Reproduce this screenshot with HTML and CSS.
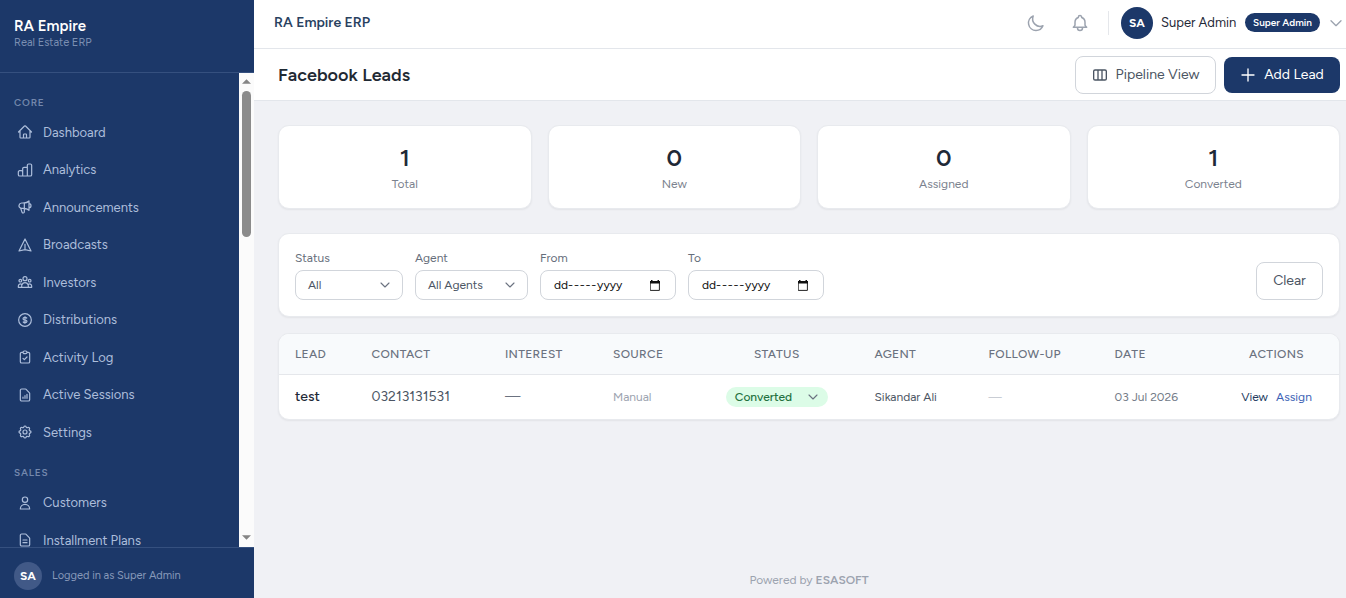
FILE: index.html
```html
<!DOCTYPE html>
<html lang="en">
<head>
    <meta charset="UTF-8">
    <meta name="viewport" content="width=device-width, initial-scale=1.0">
    <title>Facebook Leads - RA Empire ERP</title>
    <link rel="stylesheet" href="styles.css">
</head>
<body>
    <div class="app">
        <aside class="sidebar">
            <div class="brand">
                <div class="brand-name">RA Empire</div>
                <div class="brand-sub">Real Estate ERP</div>
            </div>

            <div class="nav-wrap">
                <nav class="nav">
                    <div class="nav-label">CORE</div>
                    <a class="nav-item">
                        <svg viewBox="0 0 24 24"><path d="m2.25 12 8.954-8.955c.44-.439 1.152-.439 1.591 0L21.75 12M4.5 9.75v10.125c0 .621.504 1.125 1.125 1.125H9.75v-4.875c0-.621.504-1.125 1.125-1.125h2.25c.621 0 1.125.504 1.125 1.125V21h4.125c.621 0 1.125-.504 1.125-1.125V9.75M8.25 21h8.25"/></svg>
                        <span>Dashboard</span>
                    </a>
                    <a class="nav-item">
                        <svg viewBox="0 0 24 24"><path d="M8.500 21V10a2 2 0 0 1 2-2h5M8.500 21V15a2 2 0 0 0-2-2H4a2 2 0 0 0-2 2v4a2 2 0 0 0 2 2h16a2 2 0 0 0 2-2V5a2 2 0 0 0-2-2h-2.500a2 2 0 0 0-2 2v16"/></svg>
                        <span>Analytics</span>
                    </a>
                    <a class="nav-item">
                        <svg viewBox="0 0 24 24"><path d="M11 5.882V19.240a1.760 1.760 0 0 1-3.417.592l-2.147-6.150M18 13a3 3 0 1 0 0-6M5.436 13.683A4.001 4.001 0 0 1 7 6h1.832c4.100 0 7.625-1.234 9.168-3v14c-1.543-1.766-5.067-3-9.168-3H7a3.988 3.988 0 0 1-1.564-.317Z"/></svg>
                        <span>Announcements</span>
                    </a>
                    <a class="nav-item">
                        <svg viewBox="0 0 24 24"><path d="m12 19 9 2-9-18-9 18 9-2Zm0 0v-8"/></svg>
                        <span>Broadcasts</span>
                    </a>
                    <a class="nav-item">
                        <svg viewBox="0 0 24 24"><path d="M17 20h5v-2a3 3 0 0 0-5.356-1.857M17 20H7m10 0v-2c0-.656-.126-1.283-.356-1.857M7 20H2v-2a3 3 0 0 1 5.356-1.857M7 20v-2c0-.656.126-1.283.356-1.857m0 0a5.002 5.002 0 0 1 9.288 0M15 7a3 3 0 1 1-6 0 3 3 0 0 1 6 0Zm6 3a2 2 0 1 1-4 0 2 2 0 0 1 4 0ZM7 10a2 2 0 1 1-4 0 2 2 0 0 1 4 0Z"/></svg>
                        <span>Investors</span>
                    </a>
                    <a class="nav-item">
                        <svg viewBox="0 0 24 24"><path d="M12 8c-1.657 0-3 .895-3 2s1.343 2 3 2 3 .895 3 2-1.343 2-3 2m0-8c1.110 0 2.080.402 2.599 1M12 8V7m0 1v8m0 0v1m0-1c-1.110 0-2.080-.402-2.599-1M21.500 12a9.500 9.500 0 1 1-19 0 9.500 9.500 0 0 1 19 0Z"/></svg>
                        <span>Distributions</span>
                    </a>
                    <a class="nav-item">
                        <svg viewBox="0 0 24 24"><path d="M9 5H7a2 2 0 0 0-2 2v12a2 2 0 0 0 2 2h10a2 2 0 0 0 2-2V7a2 2 0 0 0-2-2h-2M9 5a2 2 0 0 0 2 2h2a2 2 0 0 0 2-2M9 5a2 2 0 0 1 2-2h2a2 2 0 0 1 2 2m-6 9 2 2 4-4"/></svg>
                        <span>Activity Log</span>
                    </a>
                    <a class="nav-item">
                        <svg viewBox="0 0 24 24"><path d="M9 17v-2m3 2v-4m3 4v-6m2 10H7a2 2 0 0 1-2-2V5a2 2 0 0 1 2-2h5.586a1 1 0 0 1 .707.293l5.414 5.414a1 1 0 0 1 .293.707V19a2 2 0 0 1-2 2Z"/></svg>
                        <span>Active Sessions</span>
                    </a>
                    <a class="nav-item">
                        <svg viewBox="0 0 24 24"><path d="M10.325 4.317c.426-1.756 2.924-1.756 3.350 0a1.724 1.724 0 0 0 2.573 1.066c1.543-.94 3.310.826 2.370 2.370a1.724 1.724 0 0 0 1.065 2.572c1.756.426 1.756 2.924 0 3.350a1.724 1.724 0 0 0-1.066 2.573c.94 1.543-.826 3.310-2.370 2.370a1.724 1.724 0 0 0-2.572 1.065c-.426 1.756-2.924 1.756-3.350 0a1.724 1.724 0 0 0-2.573-1.066c-1.543.94-3.310-.826-2.370-2.370a1.724 1.724 0 0 0-1.065-2.572c-1.756-.426-1.756-2.924 0-3.350a1.724 1.724 0 0 0 1.066-2.573c-.94-1.543.826-3.310 2.370-2.370.996.608 2.296.07 2.572-1.065Z"/><circle cx="12" cy="12" r="3"/></svg>
                        <span>Settings</span>
                    </a>
                    <div class="nav-label nav-label-next">SALES</div>
                    <a class="nav-item">
                        <svg viewBox="0 0 24 24"><path d="M16 7a4 4 0 1 1-8 0 4 4 0 0 1 8 0ZM12 14a7 7 0 0 0-7 7h14a7 7 0 0 0-7-7Z"/></svg>
                        <span>Customers</span>
                    </a>
                    <a class="nav-item">
                        <svg viewBox="0 0 24 24"><path d="M9 12h6m-6 4h6m2 5H7a2 2 0 0 1-2-2V5a2 2 0 0 1 2-2h5.586a1 1 0 0 1 .707.293l5.414 5.414a1 1 0 0 1 .293.707V19a2 2 0 0 1-2 2Z"/></svg>
                        <span>Installment Plans</span>
                    </a>
                </nav>
                <div class="scrollbar">
                    <svg class="scroll-arrow" viewBox="0 0 10 5"><path d="M0 5 5 0l5 5Z"/></svg>
                    <div class="scroll-thumb"></div>
                    <svg class="scroll-arrow scroll-down" viewBox="0 0 10 5"><path d="M0 0h10L5 5Z"/></svg>
                </div>
            </div>

            <div class="sidebar-footer">
                <div class="avatar avatar-muted">SA</div>
                <span class="logged-in">Logged in as Super Admin</span>
            </div>
        </aside>

        <main class="main">
            <header class="topbar">
                <div class="topbar-title">RA Empire ERP</div>
                <div class="topbar-right">
                    <svg class="icon-moon" viewBox="0 0 24 24"><path d="M20.354 15.354A9 9 0 0 1 8.646 3.646 9.003 9.003 0 0 0 12 21a9.003 9.003 0 0 0 8.354-5.646Z"/></svg>
                    <svg class="icon-bell" viewBox="0 0 24 24"><path d="M15 17h5l-1.405-1.405A2.032 2.032 0 0 1 18 14.158V11a6.002 6.002 0 0 0-4-5.659V5a2 2 0 1 0-4 0v.341C7.670 6.165 6 8.388 6 11v3.159c0 .538-.214 1.055-.595 1.436L4 17h5m6 0v1a3 3 0 1 1-6 0v-1m6 0H9"/></svg>
                    <div class="divider"></div>
                    <div class="avatar avatar-user">SA</div>
                    <span class="user-name">Super Admin</span>
                    <span class="role">Super Admin</span>
                    <svg class="icon-caret" viewBox="0 0 24 24"><path d="m4.500 8.500 7.500 7.500 7.500-7.500"/></svg>
                </div>
            </header>

            <div class="page-header">
                <h1>Facebook Leads</h1>
                <div class="page-actions">
                    <a class="btn btn-pipeline">
                        <svg viewBox="0 0 24 24"><path d="M9 4.500v15m6-15v15m-10.500 0h15a2 2 0 0 0 2-2v-11a2 2 0 0 0-2-2h-15a2 2 0 0 0-2 2v11a2 2 0 0 0 2 2Z"/></svg>
                        <span>Pipeline View</span>
                    </a>
                    <a class="btn btn-primary">
                        <svg viewBox="0 0 24 24"><path d="M12 3v18M3 12h18"/></svg>
                        <span>Add Lead</span>
                    </a>
                </div>
            </div>

            <div class="content">
                <div class="stats">
                    <div class="card stat"><div class="stat-value">1</div><div class="stat-label">Total</div></div>
                    <div class="card stat"><div class="stat-value">0</div><div class="stat-label">New</div></div>
                    <div class="card stat"><div class="stat-value">0</div><div class="stat-label">Assigned</div></div>
                    <div class="card stat"><div class="stat-value">1</div><div class="stat-label">Converted</div></div>
                </div>

                <div class="card filters">
                    <div class="field field-status">
                        <label>Status</label>
                        <div class="control">
                            <span>All</span>
                            <svg class="chevron" viewBox="0 0 24 24"><path d="m4 8 8 8 8-8"/></svg>
                        </div>
                    </div>
                    <div class="field field-agent">
                        <label>Agent</label>
                        <div class="control">
                            <span>All Agents</span>
                            <svg class="chevron" viewBox="0 0 24 24"><path d="m4 8 8 8 8-8"/></svg>
                        </div>
                    </div>
                    <div class="field field-date">
                        <label>From</label>
                        <div class="control date">
                            <span>dd<i>-----</i>yyyy</span>
                            <svg class="calendar" viewBox="0 0 10 11"><path d="M.6 1.600h8.800v8.800H.6Z"/><path class="calendar-top" d="M0 1h1V0h1.500v1h5V0H9v1h1v2.600H0Z"/></svg>
                        </div>
                    </div>
                    <div class="field field-date">
                        <label>To</label>
                        <div class="control date">
                            <span>dd<i>-----</i>yyyy</span>
                            <svg class="calendar" viewBox="0 0 10 11"><path d="M.6 1.600h8.800v8.800H.6Z"/><path class="calendar-top" d="M0 1h1V0h1.500v1h5V0H9v1h1v2.600H0Z"/></svg>
                        </div>
                    </div>
                    <a class="btn btn-clear">Clear</a>
                </div>

                <div class="card table-card">
                    <table>
                        <thead>
                            <tr>
                                <th class="col-lead">LEAD</th>
                                <th class="col-contact">CONTACT</th>
                                <th class="col-interest">INTEREST</th>
                                <th class="col-source">SOURCE</th>
                                <th class="col-status center">STATUS</th>
                                <th class="col-agent">AGENT</th>
                                <th class="col-follow">FOLLOW-UP</th>
                                <th class="col-date">DATE</th>
                                <th class="col-actions center">ACTIONS</th>
                            </tr>
                        </thead>
                        <tbody>
                            <tr>
                                <td class="lead">test</td>
                                <td class="contact">03213131531</td>
                                <td class="interest">—</td>
                                <td class="source">Manual</td>
                                <td class="center">
                                    <span class="badge">Converted
                                        <svg class="chevron" viewBox="0 0 24 24"><path d="m4 8 8 8 8-8"/></svg>
                                    </span>
                                </td>
                                <td class="agent">Sikandar Ali</td>
                                <td class="follow">—</td>
                                <td class="date-cell">03 Jul 2026</td>
                                <td class="center actions"><a class="view">View</a><a class="assign">Assign</a></td>
                            </tr>
                        </tbody>
                    </table>
                </div>
            </div>

            <footer class="footer">Powered by <b>ESASOFT</b></footer>
        </main>
    </div>
</body>
</html>
```
FILE: styles.css
```css
* {
    box-sizing: border-box;
}
body {
    margin: 0;
    font-family: Figtree, Inter, "Liberation Sans", sans-serif;
    font-size: 14px;
    color: #1f2937;
    background: #f0f1f5;
}
svg {
    display: block;
    flex: none;
    fill: none;
    stroke: currentColor;
    stroke-width: 1.8;
    stroke-linecap: round;
    stroke-linejoin: round;
}
.app {
    display: flex;
    height: 598px;
    overflow: hidden;
}

/* sidebar */
.sidebar {
    width: 254px;
    flex: none;
    display: flex;
    flex-direction: column;
    background: #1c3869;
    color: #fff;
}
.brand {
    height: 73px;
    padding: 17px 14px 0;
    border-bottom: 1px solid #35507f;
}
.brand-name {
    font-size: 15px;
    font-weight: 600;
    line-height: 18px;
}
.brand-sub {
    font-size: 11px;
    line-height: 15px;
    color: #7b8fb2;
}
.nav-wrap {
    flex: 1;
    min-height: 0;
    display: flex;
}
.nav {
    flex: 1;
    padding: 8.5px 14px 0;
    overflow: hidden;
}
.nav-label {
    margin: 11.25px 0 0.75px;
    font-size: 10px;
    font-weight: 600;
    line-height: 20px;
    letter-spacing: 0.8px;
    color: #7488ad;
}
.nav-label-next {
    margin-top: 12.25px;
}
.nav-item {
    display: flex;
    align-items: center;
    gap: 10px;
    height: 37.5px;
    padding-left: 3px;
    font-size: 13px;
    color: #adbedb;
}
.nav-item svg {
    width: 16px;
    height: 16px;
}
.scrollbar {
    width: 15px;
    display: flex;
    flex-direction: column;
    align-items: center;
    padding: 6px 0 7px;
    background: #fbfbfb;
}
.scroll-arrow {
    width: 9px;
    height: 5px;
    fill: #858585;
    stroke: none;
}
.scroll-thumb {
    width: 9px;
    height: 146px;
    margin-top: 7px;
    border-radius: 5px;
    background: #8b8b8b;
}
.scroll-down {
    margin-top: auto;
}
.sidebar-footer {
    height: 51px;
    display: flex;
    align-items: center;
    gap: 10px;
    padding: 6px 14px 0;
    border-top: 1px solid #35507f;
}
.avatar {
    display: flex;
    align-items: center;
    justify-content: center;
    flex: none;
    border-radius: 50%;
    font-size: 12px;
    font-weight: 700;
    color: #fff;
}
.avatar-muted {
    width: 28px;
    height: 28px;
    background: #415987;
}
.logged-in {
    font-size: 11px;
    line-height: 14px;
    margin-bottom: 1px;
    color: #8799b9;
}

/* top bar */
.main {
    flex: 1;
    display: flex;
    flex-direction: column;
}
.topbar {
    height: 49px;
    flex: none;
    display: flex;
    align-items: center;
    justify-content: space-between;
    padding: 0 3px 3px 20px;
    background: #fff;
    border-bottom: 1px solid #e3e6eb;
}
.topbar-title {
    margin-bottom: 1px;
    font-size: 14px;
    font-weight: 600;
    color: #29415f;
}
.topbar-right {
    display: flex;
    align-items: center;
}
.icon-moon,
.icon-bell {
    width: 20px;
    height: 20px;
    color: #9ca3af;
}
.icon-bell {
    margin-left: 24px;
}
.divider {
    width: 1px;
    height: 24px;
    margin: 0 12px 0 18px;
    background: #e5e7eb;
}
.avatar-user {
    width: 32px;
    height: 32px;
    background: #1c3869;
}
.user-name {
    width: 76px;
    margin: 0 8px;
    white-space: nowrap;
    font-size: 13px;
}
.role {
    width: 75px;
    height: 19px;
    border-radius: 10px;
    background: #1c3869;
    color: #fff;
    font-size: 10px;
    font-weight: 600;
    line-height: 19px;
    text-align: center;
}
.icon-caret {
    width: 16px;
    height: 16px;
    margin-left: 8px;
    margin-right: -1px;
    color: #9ca3af;
    stroke-width: 2;
}
.page-header {
    height: 52px;
    flex: none;
    display: flex;
    align-items: center;
    justify-content: space-between;
    padding: 0 6px 0 24px;
    background: #fff;
    border-bottom: 1px solid #e3e6eb;
}
h1 {
    margin: 0;
    font-size: 18px;
    font-weight: 600;
    color: #1f2933;
}
.page-actions {
    display: flex;
    align-items: center;
    gap: 8px;
}
.btn {
    display: flex;
    align-items: center;
    justify-content: center;
    height: 38px;
    border: 1px solid #d1d5db;
    border-radius: 8px;
    background: #fff;
    font-size: 14px;
    color: #4b5563;
    white-space: nowrap;
}
.btn svg {
    width: 16px;
    height: 16px;
    stroke-width: 2;
}
.btn-pipeline {
    width: 141px;
    gap: 8px;
}
.btn-primary {
    width: 116px;
    height: 36px;
    gap: 8px;
    border: 0;
    background: #1c3869;
    color: #fff;
}

/* content */
.content {
    flex: 1;
    padding: 24px 6px 0 24px;
}
.card {
    background: #fff;
    border: 1px solid #e8eaee;
    border-radius: 11px;
    box-shadow: 0 1px 2px rgba(0, 0, 0, 0.06);
}
.stats {
    display: grid;
    grid-template-columns: repeat(4, 1fr);
    gap: 16px;
}
.stat {
    height: 84px;
    padding-top: 16px;
    text-align: center;
}
.stat-value {
    font-size: 24px;
    font-weight: 600;
    line-height: 32px;
}
.stat-label {
    font-size: 12px;
    line-height: 20px;
    color: #7b828e;
}
.filters {
    display: flex;
    align-items: flex-end;
    gap: 12px;
    height: 84px;
    margin: 24px 0 16px;
    padding: 0 16px 16px;
}
.field label {
    display: block;
    font-size: 12px;
    line-height: 16px;
    margin-bottom: 4px;
    color: #666e7b;
}
.field-status {
    width: 108px;
}
.field-agent {
    width: 113px;
}
.field-date {
    width: 136px;
}
.control {
    display: flex;
    align-items: center;
    justify-content: space-between;
    height: 30px;
    padding: 0 11px 0 12px;
    border: 1px solid #d1d5db;
    border-radius: 8px;
    font-size: 12px;
    color: #4b5563;
}
.chevron {
    width: 12px;
    height: 12px;
    color: #6b7280;
    stroke-width: 2.2;
}
.date {
    padding: 0 15px 0 13px;
    color: #111;
}
.date i {
    font-style: normal;
    letter-spacing: 0.8px;
}
.calendar {
    width: 10px;
    height: 11px;
    color: #222;
    stroke-width: 1;
}
.calendar-top {
    fill: #111;
    stroke: none;
}
.btn-clear {
    width: 67px;
    margin-left: auto;
    padding-bottom: 2px;
}

/* leads table */
.table-card {
    overflow: hidden;
}
table {
    width: 100%;
    table-layout: fixed;
    border-collapse: separate;
    border-spacing: 0;
}
th {
    height: 41px;
    padding: 0 0 1px 16px;
    border-bottom: 1px solid #e5e7eb;
    background: #f8fafc;
    font-size: 12px;
    font-weight: 500;
    letter-spacing: 0.3px;
    text-align: left;
    color: #6b7280;
}
td {
    height: 44px;
    padding: 0 0 1px 16px;
    font-size: 12px;
    white-space: nowrap;
}
th.center,
td.center {
    padding-left: 0;
    text-align: center;
}
.col-lead { width: 76.5px; }
.col-contact { width: 133.5px; }
.col-interest { width: 108px; }
.col-source { width: 98px; }
.col-status { width: 163.5px; }
.col-agent { width: 114px; }
.col-follow { width: 126px; }
.col-date { width: 115.5px; }
.lead {
    font-size: 14px;
    font-weight: 500;
}
.contact {
    font-size: 14px;
    color: #4b5563;
}
.interest {
    font-size: 14px;
    color: #6b7280;
}
.source {
    color: #9ca3af;
}
.agent {
    color: #4b5563;
}
.follow {
    color: #c9cdd4;
}
.date-cell {
    color: #737b88;
}
.badge {
    display: inline-flex;
    align-items: center;
    justify-content: space-between;
    width: 102px;
    height: 20px;
    padding: 0 9px;
    border-radius: 10px;
    background: #dcfce7;
    color: #24713f;
    font-weight: 500;
    vertical-align: middle;
}
.view {
    margin-right: 8px;
    color: #233a5e;
}
.assign {
    color: #3b62b5;
}
.footer {
    flex: none;
    height: 36px;
    padding-left: 18px;
    font-size: 12px;
    line-height: 36px;
    text-align: center;
    color: #9ca3af;
}
.footer b {
    font-weight: 600;
}
```
